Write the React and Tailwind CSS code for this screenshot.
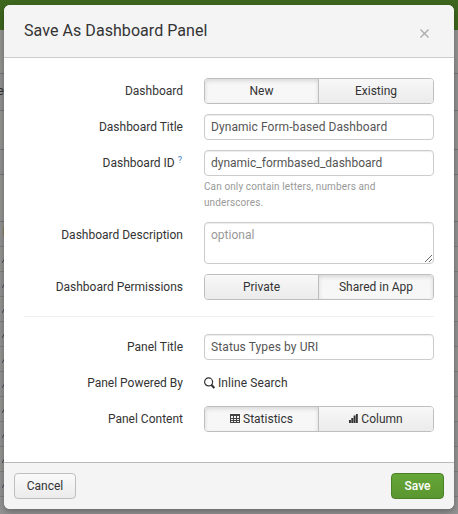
import React from "react";

const font = "font-['Roboto','Liberation_Sans',sans-serif]";

// Heights of the result rows in the dimmed page behind the dialog
const rows = [44, 37, 39, 25, 47, 25, 25, 25, 25, 25, 25, 25, 25, 25, 25, 25];

function Backdrop() {
  return (
    <div className="flex h-[514px] flex-col overflow-hidden bg-[#949494]">
      <div className="h-[30px] shrink-0 bg-[#3e661f]" />
      {rows.map((h, i) => (
        <div
          key={i}
          className={`flex shrink-0 items-center border-b ${i < 5 ? "border-[#777]" : "border-[#7f7f7f]"} ${i % 2 ? "bg-[#919191]" : "bg-[#939392]"}`}
          style={{ height: h }}
        >
          {i === 1 && <span className="-mt-1 -ml-[3px] text-[13px] leading-none text-[#333]">e</span>}
          {i === 5 && <span className="-mt-1.5 ml-[3px] h-[9px] w-px bg-[#8b8257]" />}
          {i > 5 && (
            <svg className="mt-[3px] ml-[2px]" width="3" height="5" viewBox="0 0 3 5">
              <path d="M3 0 0 5" stroke="#40485a" strokeWidth="1" />
            </svg>
          )}
        </div>
      ))}
    </div>
  );
}

function Row({ label, className = "", children }) {
  return (
    <div className={`flex items-start ${className}`}>
      <div className="w-[159px] shrink-0 text-right leading-[26px]">{label}</div>
      <div className="ml-[21px] w-[230px]">{children}</div>
    </div>
  );
}

function Toggle({ options, active }) {
  return (
    <div className="flex h-[26px] overflow-hidden rounded border border-[#bebebe]">
      {options.map((o, i) => (
        <button
          key={i}
          className={`flex h-full items-center justify-center pb-px ${i ? "flex-1 border-l border-[#bebebe]" : "w-[113px]"} ${
            i === active
              ? "bg-[#f7f7f7] shadow-[inset_0_2px_4px_rgba(0,0,0,0.13)]"
              : "bg-linear-to-b from-[#f8f8f8] to-[#ebebeb]"
          }`}
        >
          {o}
        </button>
      ))}
    </div>
  );
}

function Input({ value, className = "" }) {
  return (
    <input
      readOnly
      value={value}
      className={`block h-[26px] w-full rounded border border-[#ccc] bg-white px-1.5 pb-px text-[#555] shadow-[inset_0_1px_1px_rgba(0,0,0,0.075)] outline-none ${className}`}
    />
  );
}

const TableIcon = () => (
  <svg className="mr-[3px]" width="10" height="9" viewBox="0 0 10 9" shapeRendering="crispEdges">
    <path d="M0 0H10V9H0Z" fill="#444" />
    <path d="M1 2H3V4H1ZM4 2H6V4H4ZM7 2H9V4H7ZM1 5H3V6H1ZM4 5H6V6H4ZM7 5H9V6H7ZM1 7H3V8H1ZM4 7H6V8H4ZM7 7H9V8H7Z" fill="#f4f4f4" />
  </svg>
);

const ColumnIcon = () => (
  <svg className="mr-[3px]" width="9" height="9" viewBox="0 0 9 9">
    <path d="M0 6H1.9V9H0ZM2.3 4H4.2V9H2.3ZM4.6 1.6H6.5V9H4.6ZM6.9 0H8.8V9H6.9Z" fill="#333" />
  </svg>
);

const SearchIcon = () => (
  <svg className="mr-[3px]" width="11" height="12" viewBox="0 0 11 12" fill="none" stroke="#333">
    <circle cx="4.6" cy="4.9" r="4" strokeWidth="1.2" />
    <path d="M7.3 7.8 10.4 11.1" strokeWidth="2.2" />
  </svg>
);

export default function App() {
  return (
    <div className={`relative h-[514px] w-[458px] overflow-hidden text-[12px] text-[#333] ${font}`}>
      <Backdrop />
      <div className="absolute top-[5px] left-1 flex h-[504px] w-[450px] flex-col overflow-hidden rounded-md bg-white shadow-[0_3px_7px_rgba(0,0,0,0.3)]">
        <header className="flex h-[53px] shrink-0 items-center justify-between border-b border-[#ccc] bg-[#f4f4f4] px-5">
          <h1 className="text-[16px] leading-5 tracking-[0.06px]">Save As Dashboard Panel</h1>
          <svg className="mt-1 mr-[5px]" width="9" height="9" viewBox="0 0 9 9" stroke="#aaa" strokeWidth="1.3">
            <path d="M.5.5 8.5 8.5M8.5.5.5 8.5" />
          </svg>
        </header>

        <main className="flex-1 px-5 pt-5">
          <Row label="Dashboard">
            <Toggle options={["New", "Existing"]} active={0} />
          </Row>
          <Row label="Dashboard Title" className="mt-2.5">
            <Input value="Dynamic Form-based Dashboard" className="tracking-[0.07px]" />
          </Row>
          <Row
            className="mt-2.5"
            label={
              <span className="inline-flex">
                Dashboard ID
                <span className="-mt-[3px] mr-px ml-[3px] text-[9px] text-[#3f7fbf]">?</span>
              </span>
            }
          >
            <Input value="dynamic_formbased_dashboard" />
            <p className="mt-[3px] text-[10px] leading-4 tracking-[0.11px] text-[#999]">
              Can only contain letters, numbers and
              <br />
              underscores.
            </p>
          </Row>
          <Row label="Dashboard Description" className="mt-[11px]">
            <textarea
              placeholder="optional"
              className="block h-[42px] w-full resize rounded border border-[#ccc] px-1.5 py-[3px] leading-[18px] shadow-[inset_0_1px_1px_rgba(0,0,0,0.075)] outline-none placeholder:text-[#999]"
            />
          </Row>
          <Row label="Dashboard Permissions" className="mt-2.5">
            <Toggle options={["Private", "Shared in App"]} active={1} />
          </Row>
          <hr className="mt-4 w-[410px] border-[#eee]" />
          <Row label="Panel Title" className="mt-[17px]">
            <Input value="Status Types by URI" className="tracking-[0.1px]" />
          </Row>
          <Row label="Panel Powered By" className="mt-2.5">
            <div className="flex h-[26px] items-center tracking-[0.08px]">
              <SearchIcon />
              Inline Search
            </div>
          </Row>
          <Row label="Panel Content" className="mt-2.5">
            <Toggle
              active={0}
              options={[
                <>
                  <TableIcon />
                  Statistics
                </>,
                <>
                  <ColumnIcon />
                  Column
                </>,
              ]}
            />
          </Row>
        </main>

        <footer className="flex h-[47px] shrink-0 items-start justify-between border-t border-[#bbb] bg-[#f4f4f4] px-2.5 pt-2.5">
          <button className="h-[26px] w-[62px] rounded border border-[#bebebe] bg-linear-to-b from-[#fafafa] to-[#ebebeb] pb-px">
            Cancel
          </button>
          <button className="h-[26px] w-[53px] rounded border border-[#4a8127] bg-linear-to-b from-[#65a637] to-[#5a9630] pb-px font-medium text-white">
            Save
          </button>
        </footer>
      </div>
    </div>
  );
}
